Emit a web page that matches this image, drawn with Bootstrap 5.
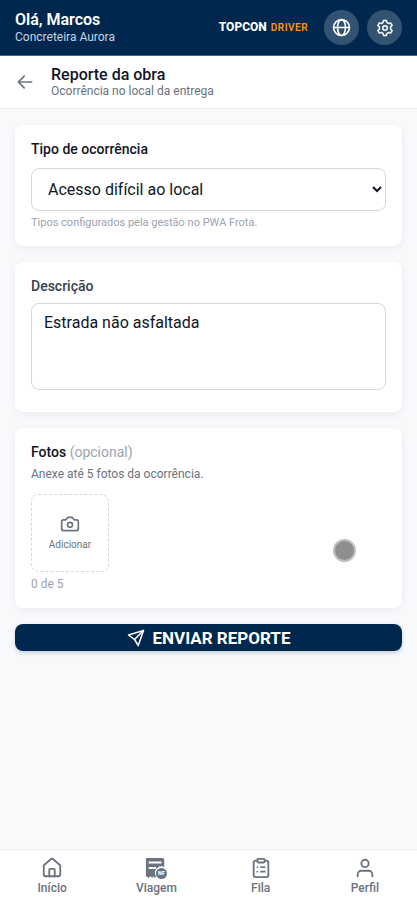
<!DOCTYPE html>
<html lang="pt-BR">
<head>
<meta charset="utf-8">
<meta name="viewport" content="width=device-width, initial-scale=1">
<title>Reporte da obra</title>
<link href="https://cdn.jsdelivr.net/npm/bootstrap@5.3.0/dist/css/bootstrap.min.css" rel="stylesheet">
<style>
  :root { --navy: #00284f; --ink: #111528; --slate: #6b7280; --mist: #9ca3af; --line: #d5d7e0; }
  body { font-family: Roboto, "Liberation Sans", sans-serif; background: #f8f9fb; color: var(--ink); font-size: 16px; line-height: 20px; }
  svg { display: block; fill: none; stroke: currentColor; stroke-width: 2; stroke-linecap: round; stroke-linejoin: round; }
  .topbar { background: var(--navy); border-bottom: 1px solid #466587; padding: 10px 15px; }
  .greeting { font-size: 16px; line-height: 19px; font-weight: 600; }
  .company { font-size: 12px; line-height: 16px; color: #c8d3e2; }
  .brand { font-size: 12px; font-weight: 800; }
  .brand-sub { font-size: 10px; font-weight: 600; color: #ff9500; letter-spacing: .05em; }
  .round-btn { width: 35px; height: 35px; background: #335372; color: #fff; }
  .pagebar { height: 53px; border-bottom: 1px solid #eeeff1; padding: 0 15px; }
  .back-link { color: var(--slate); }
  .page-title { font-size: 16px; line-height: 18px; font-weight: 500; }
  .page-note { font-size: 12px; line-height: 14px; color: var(--slate); }
  .content { padding: 16px 15px; }
  .panel { background: #fff; border-radius: 8px; box-shadow: 0 2px 8px rgba(20, 30, 60, .06); padding: 14px 16px 16px; }
  .panel-describe { padding-bottom: 22px; }
  .panel-title { font-size: 14px; line-height: 21px; font-weight: 500; }
  .describe-label { color: #374151; margin-bottom: 6px; }
  .field { font-size: 16px; color: var(--ink); border: 1px solid var(--line); border-radius: 8px; background: #fff; }
  .field-select { height: 43px; padding: 0 0 0 12px; }
  .field-text { height: 87px; padding: 9px 12px; resize: none; line-height: 20px; }
  .hint { font-size: 11px; line-height: 15px; }
  .soft { color: var(--mist); }
  .small-note { font-size: 12px; line-height: 16px; }
  .photo-note { color: var(--slate); margin: 3px 0 12px; }
  .add-photo { width: 78px; height: 78px; border: 1px dashed #d5d7dc; border-radius: 8px; background: #fff; color: var(--slate); font-size: 10px; line-height: 14px; gap: 4px; }
  .send-btn { background: var(--navy); color: #fff; height: 27px; border-radius: 8px; font-size: 17px; line-height: 20px; font-weight: 700; box-shadow: 0 2px 4px rgba(0, 40, 79, .18); }
  .send-btn:hover { background: #0a3764; color: #fff; }
  .tabs { border-top: 1px solid #eceef0; height: 55px; padding-top: 7px; }
  .tabs a { color: var(--slate); font-size: 12px; line-height: 16px; font-weight: 500; gap: 1px; }
  .touch-dot { width: 23px; height: 23px; right: 46px; bottom: 46px; background: #8e8e8e; border: 2px solid #bfbfbf; }
  .nf { font-size: 6px; font-weight: 800; }
</style>
</head>
<body class="d-flex flex-column min-vh-100">
<header class="topbar d-flex align-items-center text-white">
  <div class="me-auto">
    <div class="greeting">Olá, Marcos</div>
    <div class="company">Concreteira Aurora</div>
  </div>
  <div class="d-flex align-items-baseline gap-1 me-3"><span class="brand">TOPCON</span><span class="brand-sub">DRIVER</span></div>
  <div class="d-flex gap-2">
    <button type="button" class="round-btn btn border-0 rounded-circle p-0 d-flex align-items-center justify-content-center" aria-label="Idioma">
      <svg width="19" height="19" viewBox="0 0 24 24"><circle cx="12" cy="12" r="10"/><ellipse cx="12" cy="12" rx="5" ry="10"/><path d="M2 12h20"/></svg>
    </button>
    <button type="button" class="round-btn btn border-0 rounded-circle p-0 d-flex align-items-center justify-content-center" aria-label="Configurações">
      <svg width="18" height="18" viewBox="0 0 24 24"><path d="M9.600 4 10 2h4l.4 2.600 2.600 1.500 2.500-1 2 3.500-2 1.700v3.400l2 1.700-2 3.500-2.500-1-2.600 1.500L14 22h-4l-.4-2.600L7 17.900l-2.500 1-2-3.500 2-1.700v-3.400l-2-1.700 2-3.500 2.500 1 2.600-1.500z"/><circle cx="12" cy="12" r="3"/></svg>
    </button>
  </div>
</header>

<div class="pagebar bg-white d-flex align-items-center">
  <a href="#" class="back-link me-3" aria-label="Voltar">
    <svg width="20" height="20" viewBox="0 0 24 24"><path d="M20 12H4M11 5l-7 7 7 7"/></svg>
  </a>
  <div>
    <h1 class="page-title m-0">Reporte da obra</h1>
    <p class="page-note m-0">Ocorrência no local da entrega</p>
  </div>
</div>

<main class="content flex-grow-1 d-flex flex-column gap-3">
  <section class="panel">
    <label class="panel-title d-block mb-2" for="tipo">Tipo de ocorrência</label>
    <select id="tipo" class="field field-select d-block w-100"><option>Acesso difícil ao local</option></select>
    <p class="hint soft mt-1 mb-0">Tipos configurados pela gestão no PWA Frota.</p>
  </section>

  <section class="panel panel-describe">
    <label class="panel-title describe-label d-block" for="descricao">Descrição</label>
    <textarea id="descricao" class="field field-text d-block w-100">Estrada não asfaltada</textarea>
  </section>

  <section class="panel position-relative">
    <h2 class="panel-title m-0">Fotos <span class="fw-normal soft">(opcional)</span></h2>
    <p class="small-note photo-note">Anexe até 5 fotos da ocorrência.</p>
    <button type="button" class="add-photo d-flex flex-column align-items-center justify-content-center p-0">
      <svg width="20" height="20" viewBox="0 0 24 24"><path d="M14.500 4h-5L7 7H4a2 2 0 0 0-2 2v9a2 2 0 0 0 2 2h16a2 2 0 0 0 2-2V9a2 2 0 0 0-2-2h-3z"/><circle cx="12" cy="13" r="3"/></svg>
      Adicionar
    </button>
    <p class="small-note soft mb-0 mt-1">0 de 5</p>
    <span class="touch-dot position-absolute rounded-circle"></span>
  </section>

  <button type="submit" class="send-btn btn border-0 p-0 d-flex align-items-center justify-content-center gap-2">
    <svg width="18" height="18" viewBox="0 0 24 24"><path d="M22 2 15 22 10 14 2 8z"/><path d="M22 2 10 14"/></svg>
    ENVIAR REPORTE
  </button>
</main>

<nav class="tabs bg-white row g-0 sticky-bottom">
  <a href="#" class="col d-flex flex-column align-items-center text-decoration-none">
    <svg width="22" height="22" viewBox="0 0 24 24"><path d="M3 10a2 2 0 0 1 .7-1.500l7-6a2 2 0 0 1 2.600 0l7 6A2 2 0 0 1 21 10v9a2 2 0 0 1-2 2H5a2 2 0 0 1-2-2z"/><path d="M9 21v-7a1 1 0 0 1 1-1h4a1 1 0 0 1 1 1v7"/></svg>
    Início
  </a>
  <a href="#" class="col d-flex flex-column align-items-center text-decoration-none">
    <svg width="22" height="22" viewBox="0 0 24 24"><path fill="currentColor" stroke="none" fill-rule="evenodd" d="M2 1h17a2 2 0 0 1 2 2v8a7 7 0 0 0-9 10l-1 2-2-2-1 2-2-2-2 2-2-2-1 1V2a1 1 0 0 1 1-1zM4 5v2h14V5zm0 6v2h8v-2z"/><circle cx="18" cy="18" r="6" fill="currentColor" stroke="none"/><text class="nf" x="18" y="20" text-anchor="middle" fill="#fff" stroke="none">NF</text></svg>
    Viagem
  </a>
  <a href="#" class="col d-flex flex-column align-items-center text-decoration-none">
    <svg width="22" height="22" viewBox="0 0 24 24"><rect x="8" y="2" width="8" height="4" rx="1"/><path d="M16 4h2a2 2 0 0 1 2 2v14a2 2 0 0 1-2 2H6a2 2 0 0 1-2-2V6a2 2 0 0 1 2-2h2M12 11h4M12 16h4M8 11h.01M8 16h.01"/></svg>
    Fila
  </a>
  <a href="#" class="col d-flex flex-column align-items-center text-decoration-none">
    <svg width="22" height="22" viewBox="0 0 24 24"><circle cx="12" cy="7" r="4"/><path d="M4 21v-2a4 4 0 0 1 4-4h8a4 4 0 0 1 4 4v2"/></svg>
    Perfil
  </a>
</nav>
<script src="https://cdn.jsdelivr.net/npm/bootstrap@5.3.0/dist/js/bootstrap.bundle.min.js"></script>
</body>
</html>
